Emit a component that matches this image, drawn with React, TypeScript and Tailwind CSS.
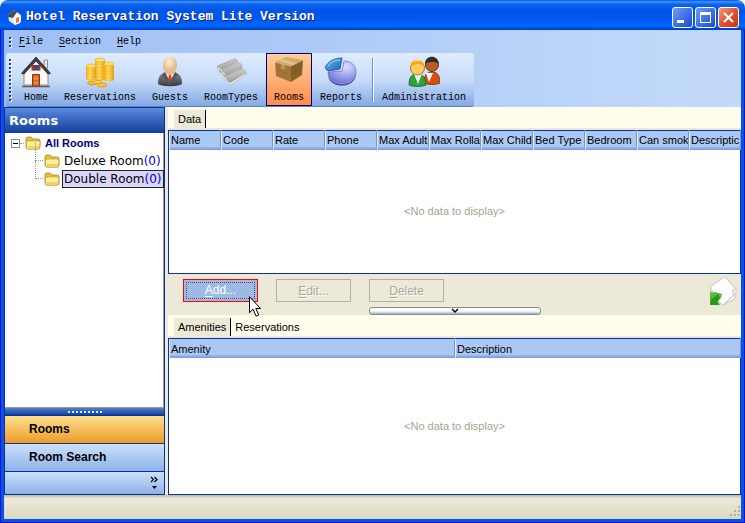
import type { ReactNode } from "react";
import { clsx } from "clsx";

function HouseIcon() {
  return (
    <svg viewBox="0 0 32 32" className="-mx-1 size-8" aria-hidden="true">
      <path d="M24 4h3.500v8H24z" fill="#e9e4d8" stroke="#777" strokeWidth=".8" />
      <path d="M4 14 16 3l12 11v15H4z" fill="#fbf8f3" stroke="#8f8b84" />
      <path d="M16 1 1.500 17.500l2.500.500L16 5l12 13 2.500-.5z" fill="#3f3d44" stroke="#26242a" strokeWidth=".8" />
      <path d="M13 9h6v5.500h-6z" fill="#454a68" />
      <path d="M11.500 9H14v5.500h-2.500zM18 9h2.500v5.500H18z" fill="#a8332c" />
      <path d="M12.500 18.500h7V30h-7z" fill="#db6421" stroke="#8a3810" />
      <path d="M14 20.500h4v3.500h-4zM14 25.500h4v3h-4z" fill="#ef8139" />
      <path d="M2 30.500h28" stroke="#6b5a48" strokeWidth="1.500" />
    </svg>
  );
}

function Coins({ x, y, rows }: { x: number; y: number; rows: number }) {
  return (
    <g>
      <path d={`M${x} ${y}v${rows * 3}c0 3 10 3 10 0v-${rows * 3}z`} fill="url(#coin)" />
      {Array.from({ length: rows }, (_, i) => (
        <path
          key={i}
          d={`M${x} ${y + 3 + i * 3}c0 2.500 10 2.500 10 0`}
          fill="none"
          stroke="#eba817"
          strokeWidth=".4"
        />
      ))}
      <ellipse cx={x + 5} cy={y} rx="5" ry="2" fill="#ffe06c" stroke="#e5a317" strokeWidth=".6" />
    </g>
  );
}

function CoinsIcon() {
  return (
    <svg viewBox="0 0 32 32" className="size-8" aria-hidden="true">
      <defs>
        <linearGradient id="coin">
          <stop offset="0" stopColor="#f3a70c" />
          <stop offset=".4" stopColor="#ffe06a" />
          <stop offset="1" stopColor="#ee9b06" />
        </linearGradient>
      </defs>
      <Coins x={11} y={4} rows={6} />
      <Coins x={2} y={10} rows={4} />
      <Coins x={20} y={8} rows={5} />
      <ellipse cx="8" cy="27" rx="4.500" ry="2" fill="#f8bb27" stroke="#d98b04" strokeWidth=".7" />
      <ellipse cx="14" cy="26" rx="4" ry="1.800" fill="#ffd94f" stroke="#d98b04" strokeWidth=".7" />
      <ellipse cx="18" cy="29" rx="5" ry="2" fill="#fbc52f" stroke="#d98b04" strokeWidth=".7" />
    </svg>
  );
}

function GuestIcon() {
  return (
    <svg viewBox="0 0 32 32" className="size-8" aria-hidden="true">
      <defs>
        <radialGradient id="face" cx=".45" cy=".25">
          <stop offset="0" stopColor="#fff3d6" />
          <stop offset="1" stopColor="#e2b98a" />
        </radialGradient>
        <linearGradient id="suit" x2="0" y2="1">
          <stop offset="0" stopColor="#8a8b90" />
          <stop offset="1" stopColor="#3b3c41" />
        </linearGradient>
      </defs>
      <path d="M4 28c0-8 3-11 8-12h8c5 1 8 4 8 12-4 3-20 3-24 0z" fill="url(#suit)" />
      <path d="m11 16 5 11 5-11z" fill="#f5f5f5" />
      <path d="m14.500 17 1.500-1 1.500 1-.5 2 1 5-2 3-2-3 1-5z" fill="#dd3b20" />
      <path d="m11 16-3 3 8 10 8-10-3-3-5 10z" fill="#56575d" />
      <path d="M9 9c0-5 3-8 7-8s7 3 7 8-3 10-7 10-7-5-7-10z" fill="url(#face)" />
    </svg>
  );
}

function RoomTypesIcon() {
  return (
    <svg viewBox="0 0 32 32" className="size-8" aria-hidden="true">
      <defs>
        <linearGradient id="slat" x2=".3" y2="1">
          <stop offset="0" stopColor="#dedede" />
          <stop offset="1" stopColor="#989898" />
        </linearGradient>
      </defs>
      <path d="m2 11 18-9 11 16-16 11z" fill="#e4e4e4" />
      <path d="M2 10 19 3c2-1 3 1 4 3L7 14c-2-2-3-3-5-4z" fill="url(#slat)" stroke="#a0a0a0" strokeWidth=".6" />
      <path d="m7 15 17-8c2 0 3 2 3 5l-16 8c-1-3-2-4-4-5z" fill="url(#slat)" stroke="#a0a0a0" strokeWidth=".6" />
      <path d="m11 21 16-8c2 0 4 2 4 5L15 27c-1-3-2-5-4-6z" fill="url(#slat)" stroke="#a0a0a0" strokeWidth=".6" />
      <path d="m2 11 1 4 12 14 16-10v-2L15 27z" fill="#f5f5f5" stroke="#a9a9a9" strokeWidth=".6" />
      <path d="m4 14 3 3M8 18l3 4M12 23l3 3" stroke="#999" strokeWidth="1.200" />
    </svg>
  );
}

function BoxIcon() {
  return (
    <svg viewBox="0 0 32 32" className="-mx-1 size-8" aria-hidden="true">
      <path d="M2 6 13 1l17 3-12 6z" fill="#d0aa6c" />
      <path d="m2 6 16 4v16L3 20z" fill="#a37637" />
      <path d="m18 10 12-6-1 15-11 7z" fill="#836027" />
      <path d="m8 3 15 4-3 2L5 4.500z" fill="#e2c38b" />
      <path d="m8 7.500 4 1v5l-4-1z" fill="#bf9656" />
      <path d="m2 6 16 4 12-6" fill="none" stroke="#ddbb83" strokeWidth=".7" />
      <path d="m4 14 13 4M19 17l10-6" stroke="#76531f" strokeWidth=".5" opacity=".5" />
    </svg>
  );
}

function PieIcon() {
  return (
    <svg viewBox="0 0 32 32" className="size-8" aria-hidden="true">
      <defs>
        <radialGradient id="pie" cx=".65" cy=".25" r=".8">
          <stop offset="0" stopColor="#dcdcff" />
          <stop offset="1" stopColor="#6f75d4" />
        </radialGradient>
        <linearGradient id="slice" x2="1" y2="1">
          <stop offset="0" stopColor="#6fbcf2" />
          <stop offset="1" stopColor="#1762b8" />
        </linearGradient>
      </defs>
      <path d="M3 17c0 14 28 15 28-1v2c0 15-28 16-28 0z" fill="#4c50a8" />
      <path d="m17 15 2-10c7 0 12 4 12 11 0 14-28 15-28 0z" fill="url(#pie)" stroke="#5a60bd" strokeWidth=".6" />
      <path d="M0 12C2 6 9 2 17 2l-2 11-12 2z" fill="url(#slice)" stroke="#184e95" strokeWidth=".8" />
      <path d="M3 10c3-4 7-6 12-6" fill="none" stroke="#a9dcff" />
    </svg>
  );
}

function PeopleIcon() {
  return (
    <svg viewBox="0 0 32 32" className="size-8" aria-hidden="true">
      <path d="M16 27c0-8 3-11 8-11s8 3 8 11c-5 2-11 2-16 0z" fill="#d84e10" stroke="#7b2c08" strokeWidth=".8" />
      <path d="m18 17 3 9 4-9z" fill="#fff" />
      <circle cx="24" cy="9" r="6.500" fill="#b75c22" stroke="#4b220c" strokeWidth=".8" />
      <path d="M17 8c0-9 13-10 14 0-4-3-9-3-14 0z" fill="#2c2c30" />
      <path d="M1 29c0-8 3-11 8-11s9 3 9 11c-5 2-12 2-17 0z" fill="#2fa33b" stroke="#14631f" strokeWidth=".8" />
      <path d="m6 18 4 10 4-10z" fill="#e7ffe4" />
      <circle cx="9.500" cy="12" r="7" fill="#ffca62" stroke="#a05c04" strokeWidth=".8" />
      <path d="M2.500 11c0-9 13-10 14 0-3-4-9-4-14 0z" fill="#f3a90d" />
      <path d="M6 6c2-2 5-2 7-1" fill="none" stroke="#ffe79a" />
    </svg>
  );
}

function FolderIcon() {
  return (
    <svg viewBox="0 0 16 14" className="h-3.5 w-4 shrink-0" aria-hidden="true">
      <path d="M1 3q0-2 2-2h3l2 2h5q2 0 2 2v6q0 2-2 2H3q-2 0-2-2z" fill="#e9bf3a" stroke="#ab8620" strokeWidth=".8" />
      <path d="M1.500 6Q2 5 3 5h11q1.500 0 1 1.500L14.500 12q-.3 1-1.500 1H3q-1.500 0-1.500-1z" fill="#fff0a0" stroke="#b8922a" strokeWidth=".6" />
      <path d="M3 10h11l-.5 2H3z" fill="#f4d252" />
    </svg>
  );
}

function ExportIcon() {
  return (
    <svg viewBox="0 0 28 30" className="h-[30px] w-7" aria-hidden="true">
      <path d="M1 11 15 1q1-.5 2 .5l10 12q1 2-1 4v5L14 29 8 24z" fill="#fff" stroke="#c3c3c3" />
      <path d="M26 13q-4 2-1 6l-10 9" fill="none" stroke="#d4d4d4" strokeWidth="1.500" />
      <path d="M1 15q2 3 5 1l7 2-1 4-3 3 2 4H1z" fill="#58bb3a" />
      <path d="m1 29 1-6 2-1 5-4 2 4-3 4 2 3z" fill="#2b961f" />
    </svg>
  );
}

function PointerIcon() {
  return (
    <svg viewBox="0 0 12 21" className="pointer-events-none absolute top-[17px] left-[66px] z-10 h-[21px] w-3" aria-hidden="true">
      <path d="M.5.700v16l3.600-3.500 3 7 2.700-1.200-3-6.500h4.700z" fill="#fff" stroke="#000" />
    </svg>
  );
}

const toolbarItems: { label: string; icon: ReactNode }[] = [
  { label: "Home", icon: <HouseIcon /> },
  { label: "Reservations", icon: <CoinsIcon /> },
  { label: "Guests", icon: <GuestIcon /> },
  { label: "RoomTypes", icon: <RoomTypesIcon /> },
  { label: "Rooms", icon: <BoxIcon /> },
  { label: "Reports", icon: <PieIcon /> },
];

const roomColumns = [
  "Name",
  "Code",
  "Rate",
  "Phone",
  "Max Adult",
  "Max Rolla",
  "Max Child",
  "Bed Type",
  "Bedroom",
  "Can smok",
  "Descriptic",
];

const roomTypes = [
  { name: "Deluxe Room", count: 0, selected: false },
  { name: "Double Room", count: 0, selected: true },
];

function Mnemonic({ text }: { text: string }) {
  return (
    <>
      <span className="underline underline-offset-2">{text[0]}</span>
      {text.slice(1)}
    </>
  );
}

function Grip({ dots }: { dots: number }) {
  return (
    <div className="flex flex-col gap-0.5" aria-hidden="true">
      {Array.from({ length: dots }, (_, i) => (
        <span key={i} className="size-0.5 bg-[#27418a] shadow-[1px_1px_0_#fff]" />
      ))}
    </div>
  );
}

function TitleBar() {
  return (
    <header className="flex h-[30px] shrink-0 items-center rounded-t-lg bg-[linear-gradient(#0a4fd8_0%,#3d95ff_6%,#0a62f0_14%,#0055e5_35%,#0058ee_65%,#0066ff_85%,#0050e0_94%,#0038b8_100%)] pt-1 pr-1.5 pl-2">
      <svg viewBox="0 0 14 16" className="h-4 w-3.5" aria-hidden="true">
        <path d="m0 6 6-5 7 5v7l-6 3-6-4z" fill="#e5e5e2" />
        <path d="m0 6 6-5 3 2-4 6-5-1z" fill="#4b4d55" />
        <path d="m5 9 4-5 4 3-1 7-5 2z" fill="#fff" />
        <path d="m8 9 3-1v5l-3 1z" fill="#e47a35" />
      </svg>
      <h1 className="ml-1 flex-1 truncate font-['Liberation_Mono',monospace] text-[13px] leading-4 font-bold text-white [text-shadow:1px_1px_0_#0a1e78]">
        Hotel Reservation System Lite Version
      </h1>
      <div className="flex gap-0.5">
        <button type="button" aria-label="Minimize" className="size-[21px] rounded-[3px] border border-white bg-linear-to-br from-[#6f9cf8] to-[#1b47cf]">
          <svg viewBox="0 0 19 19" aria-hidden="true">
            <path d="M4 12h7v3H4z" fill="#fff" />
          </svg>
        </button>
        <button type="button" aria-label="Maximize" className="size-[21px] rounded-[3px] border border-white bg-linear-to-br from-[#6f9cf8] to-[#1b47cf]">
          <svg viewBox="0 0 19 19" aria-hidden="true">
            <path d="M4 4h11v11H4zM5 7v7h9V7z" fill="#fff" fillRule="evenodd" />
          </svg>
        </button>
        <button type="button" aria-label="Close" className="size-[21px] rounded-[3px] border border-white bg-linear-to-br from-[#f09a7c] via-[#e0502c] to-[#c23a12]">
          <svg viewBox="0 0 19 19" aria-hidden="true">
            <path d="m5 5 9 9M14 5l-9 9" stroke="#fff" strokeWidth="2.200" />
          </svg>
        </button>
      </div>
    </header>
  );
}

function ToolbarButton({ label, icon, active }: { label: string; icon: ReactNode; active?: boolean }) {
  return (
    <button
      type="button"
      aria-pressed={active}
      className={clsx(
        "flex shrink-0 flex-col items-center gap-1 border px-[7px] pt-0.5 pb-px text-[10px] leading-3",
        active
          ? "border-[#000080] bg-linear-to-b from-[#ffcd9b] to-[#fe8e4a]"
          : "border-transparent",
      )}
    >
      {icon}
      {label}
    </button>
  );
}

function Toolbars() {
  return (
    <div className="shrink-0 bg-linear-to-r from-[#9ebef5] to-[#c3daf9] font-['Liberation_Mono',monospace]">
      <nav className="flex h-[23px] items-center pl-[5px] text-[10px] leading-3">
        <Grip dots={3} />
        <div className="flex">
          {["File", "Section", "Help"].map((item) => (
            <button key={item} type="button" className="px-2">
              <Mnemonic text={item} />
            </button>
          ))}
        </div>
      </nav>
      <div className="ml-0.5 flex w-fit items-center rounded-[3px] border-b border-[#5f80bf] bg-linear-to-b from-[#dfecfe] via-[#c8dcf9] to-[#85a9e4] pl-[3px]">
        <Grip dots={11} />
        <div className="ml-[5px] flex items-center">
          {toolbarItems.map((item) => (
            <ToolbarButton key={item.label} {...item} active={item.label === "Rooms"} />
          ))}
          <div className="ml-0.5 h-11 w-0.5 border-l border-[#6a8ccb] bg-white" />
          <ToolbarButton label="Administration" icon={<PeopleIcon />} />
        </div>
      </div>
    </div>
  );
}

function RoomTree() {
  return (
    <div className="min-h-0 flex-1 border-r border-b border-[#9c9a8c] bg-white pt-px pl-1.5 text-[11px]">
      <div className="flex h-[18px] items-center">
        <button type="button" aria-label="Collapse All Rooms" className="size-[9px] border border-[#8a8a8a]">
          <span className="mx-auto block h-px w-[5px] bg-black" />
        </button>
        <span className="mr-px w-1 border-t border-dotted border-[#999]" />
        <FolderIcon />
        <span className="ml-1 font-bold text-[#000080]">All Rooms</span>
      </div>
      <ul className="ml-6">
        {roomTypes.map((room) => (
          <li key={room.name} className="flex h-[18px] items-center">
            <span className="-mt-[18px] mr-px h-[18px] w-2 shrink-0 border-b border-l border-dotted border-[#999]" />
            <FolderIcon />
            <button
              type="button"
              className={clsx(
                "ml-0.5 border px-px text-left font-['DejaVu_Sans',sans-serif] text-[12px] leading-4 whitespace-nowrap",
                room.selected ? "border-[#222] bg-[#dad6fb]" : "border-transparent",
              )}
            >
              {room.name}
              <span className="text-[#0000e0]">({room.count})</span>
            </button>
          </li>
        ))}
      </ul>
    </div>
  );
}

function Sidebar() {
  return (
    <aside className="flex w-[161px] shrink-0 flex-col border border-[#0a319b]">
      <h2 className="bg-linear-to-b from-[#5a8adc] to-[#123f9a] pl-1 font-['DejaVu_Sans',sans-serif] text-[13px] leading-[25px] font-bold text-white">
        Rooms
      </h2>
      <RoomTree />
      <div className="flex h-[7px] shrink-0 items-center justify-center gap-0.5 bg-linear-to-b from-[#4f80d4] to-[#123f9a]">
        {Array.from({ length: 9 }, (_, i) => (
          <span key={i} className="size-0.5 bg-[#d9edf6]" />
        ))}
      </div>
      <button type="button" className="border-t border-[#0a319b] bg-linear-to-b from-[#fbdf8c] to-[#ee9c1d] pl-6 text-left text-[12px] leading-[27px] font-bold">
        Rooms
      </button>
      <button type="button" className="border-t border-[#0a319b] bg-linear-to-b from-[#cde0fa] to-[#8db2e8] pl-6 text-left text-[12px] leading-[27px] font-bold">
        Room Search
      </button>
      <div className="flex h-[23px] shrink-0 items-center justify-end border-t border-[#0a319b] bg-linear-to-b from-[#cde0fa] to-[#8db2e8] pr-1.5">
        <button type="button" aria-label="Configure buttons">
          <svg viewBox="0 0 8 14" className="h-3.5 w-2" aria-hidden="true">
            <path d="m1 1 2.500 2.500L1 6M4.500 1 7 3.500 4.500 6" fill="none" stroke="#000" strokeWidth="1.200" />
            <path d="M2 10h5l-2.500 3z" fill="#000" />
          </svg>
        </button>
      </div>
    </aside>
  );
}

function TabStrip({ tabs }: { tabs: string[] }) {
  return (
    <div role="tablist" className="flex h-[23px] shrink-0 items-stretch border-b-2 border-[#ece9d8] bg-[#fffeec] pt-[3px] pl-1.5">
      {tabs.map((tab, i) => (
        <button
          key={tab}
          type="button"
          role="tab"
          aria-selected={i === 0}
          className={clsx(
            "px-1 text-[11px]",
            i === 0 && "border-r border-black bg-[#ece9d8]",
          )}
        >
          {tab}
        </button>
      ))}
    </div>
  );
}

function DataGrid({ columns }: { columns: string[] }) {
  return (
    <table className="h-full w-full table-fixed border-collapse border border-[#0831a5] bg-white text-[11px]">
      <thead>
        <tr className="h-[19px] bg-linear-to-b from-[#a9c7f3] via-[#adc9f2] via-80% to-[#6f98dc]">
          {columns.map((column) => (
            <th
              key={column}
              scope="col"
              className="overflow-hidden border-r border-[#7396d5] pl-0.5 text-left leading-4 font-normal whitespace-nowrap shadow-[inset_1px_0_0_#e2eefd]"
            >
              {column}
            </th>
          ))}
        </tr>
      </thead>
      <tbody>
        <tr>
          <td colSpan={columns.length} className="text-center align-middle text-[#a5a293]">
            &lt;No data to display&gt;
          </td>
        </tr>
      </tbody>
    </table>
  );
}

function ActionBar() {
  return (
    <div className="shrink-0 bg-[#ece9d8]">
      <div className="flex h-[33px] items-center justify-between pr-1 pl-[15px]">
        <div className="flex gap-[18px] text-[12px]">
          <div className="relative">
            <button type="button" className="h-[23px] w-[75px] border border-[#ff0000] bg-[#9db9e5] p-0.5 text-white">
              <span className="block border border-dotted border-[#5a5048] leading-[15px]">
                <Mnemonic text="Add..." />
              </span>
            </button>
            <PointerIcon />
          </div>
          {["Edit...", "Delete"].map((action) => (
            <button key={action} type="button" disabled className="h-[23px] w-[75px] border border-[#b5b1a0] text-[#aca899] [text-shadow:1px_1px_0_#fff]">
              <Mnemonic text={action} />
            </button>
          ))}
        </div>
        <button type="button" aria-label="Export">
          <ExportIcon />
        </button>
      </div>
      <button
        type="button"
        aria-label="Collapse lower panel"
        className="mx-auto flex h-2 w-[172px] items-center justify-center rounded-[3px] border border-[#8c8c84] bg-linear-to-b from-white from-50% to-[#8fb0cf]"
      >
        <svg viewBox="0 0 8 6" className="h-1.5 w-2" aria-hidden="true">
          <path d="m1 1 3 3 3-3" fill="none" stroke="#000" strokeWidth="1.500" />
        </svg>
      </button>
    </div>
  );
}

function StatusBar() {
  return (
    <footer className="flex h-6 shrink-0 items-end justify-end bg-linear-to-b from-[#bdb9a5] via-[#ece9d8] via-15% to-[#dcd8c2] pb-0.5">
      <svg viewBox="0 0 12 12" className="size-3" aria-hidden="true">
        <path d="M9 1h2v2H9zM5 5h2v2H5zM9 5h2v2H9zM1 9h2v2H1zM5 9h2v2H5zM9 9h2v2H9z" fill="#b3af9c" />
      </svg>
    </footer>
  );
}

export default function App() {
  return (
    <div className="flex h-screen min-h-96 flex-col overflow-hidden bg-white font-['Liberation_Sans',Arial,sans-serif] text-black">
      <TitleBar />
      <div className="flex min-h-0 flex-1 flex-col bg-[#0a50ec] px-1 pb-1 shadow-[inset_1px_-1px_0_#0019b8,inset_-1px_0_0_#0019b8]">
        <Toolbars />
        <div className="flex min-h-0 flex-1 bg-[#ece9d8]">
          <Sidebar />
          <main className="ml-[3px] flex min-w-0 flex-1 flex-col">
            <TabStrip tabs={["Data"]} />
            <div className="min-h-0 flex-[12]">
              <DataGrid columns={roomColumns} />
            </div>
            <ActionBar />
            <TabStrip tabs={["Amenities", "Reservations"]} />
            <div className="min-h-0 flex-[13]">
              <DataGrid columns={["Amenity", "Description"]} />
            </div>
          </main>
        </div>
        <StatusBar />
      </div>
    </div>
  );
}
